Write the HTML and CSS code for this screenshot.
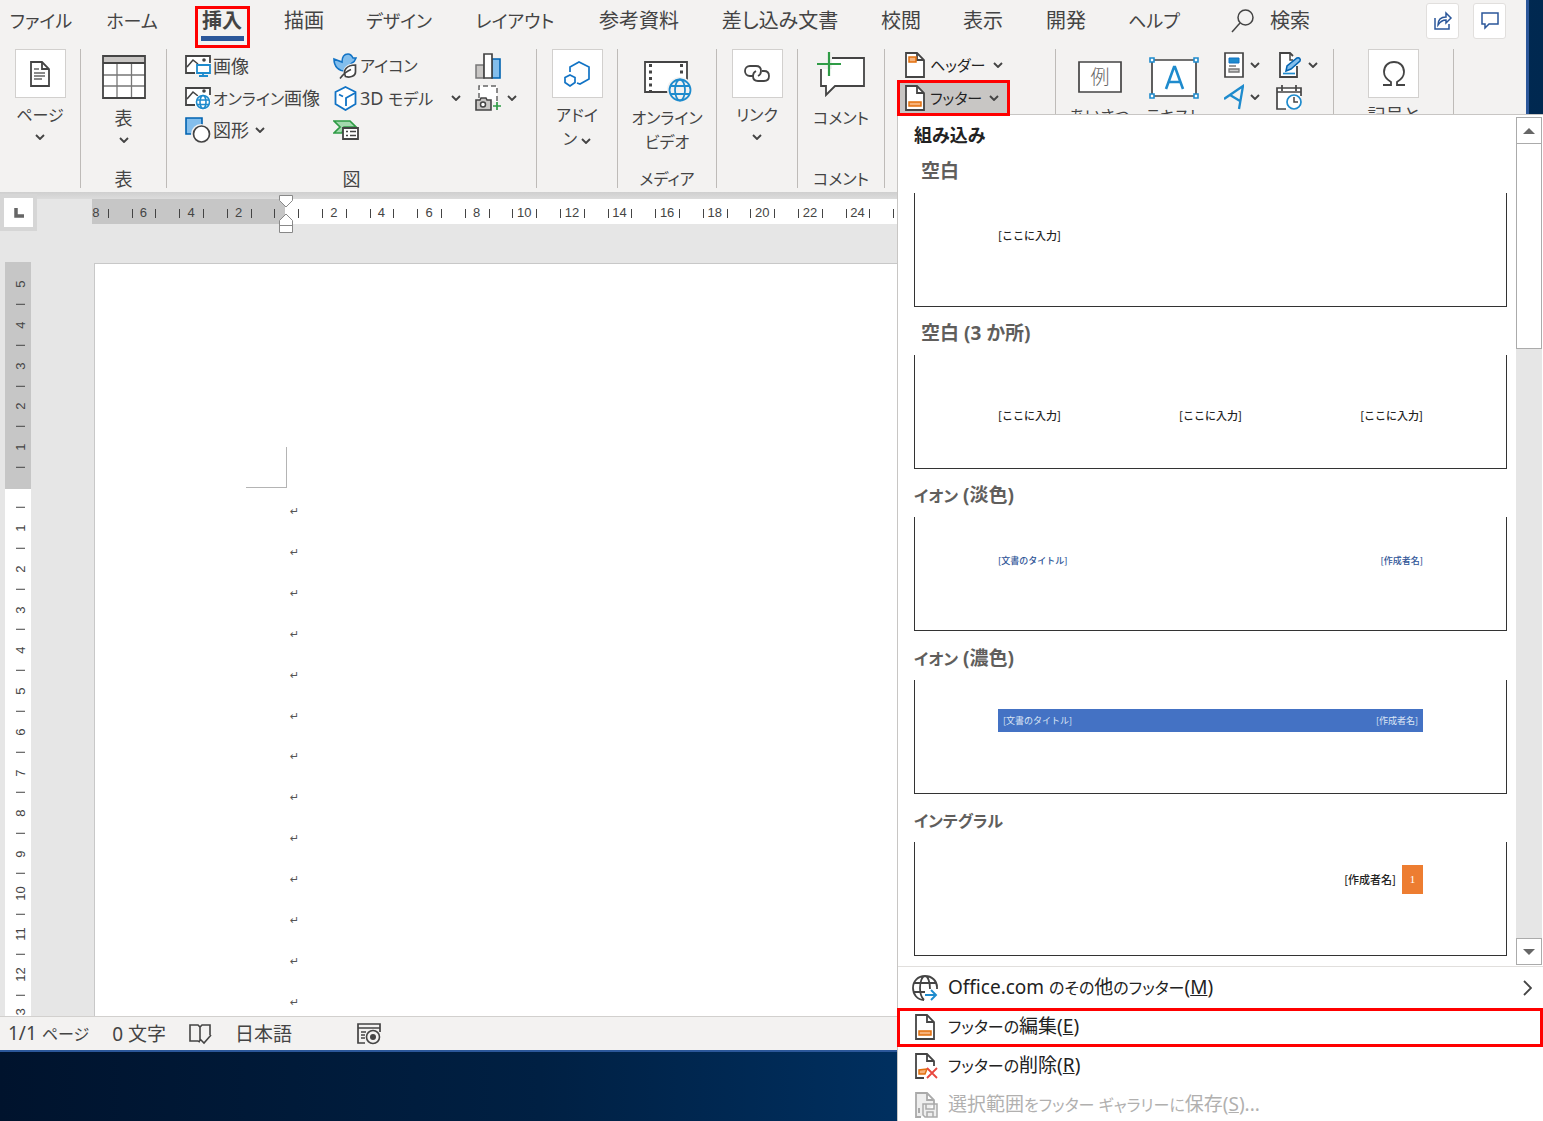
FILE: index.html
```html
<!DOCTYPE html>
<html lang="ja">
<head>
<meta charset="utf-8">
<meta name="viewport" content="width=device-width, initial-scale=1">
<title>文書 1</title>
<link rel="stylesheet" href="styles.css">
</head>
<body>
<svg class="defs" aria-hidden="true">
  <symbol id="chev" viewBox="0 0 10 6"><path d="M1 1l4 4 4-4" fill="none" stroke="#444" stroke-width="1.9"/></symbol>
  <symbol id="globe" viewBox="0 0 24 24"><g fill="none" stroke="currentColor"><circle cx="12" cy="12" r="10.500"/><ellipse cx="12" cy="12" rx="5" ry="10.500"/><path d="M2 8h20M2 16h20"/></g></symbol>
  <symbol id="sheet" viewBox="0 0 20 26"><path d="M1 1h11l7 7v17H1z" fill="#fff" stroke="#444" stroke-width="1.8"/><path d="M12 1v7h7" fill="none" stroke="#444" stroke-width="1.8"/></symbol>
</svg>

<div class="window">
  <header class="tabs">
    <nav class="tab-list">
      <a href="#" class="tab kana">ファイル</a>
      <a href="#" class="tab kana">ホーム</a>
      <a href="#" class="tab active"><span>挿入</span></a>
      <a href="#" class="tab">描画</a>
      <a href="#" class="tab kana">デザイン</a>
      <a href="#" class="tab kana">レイアウト</a>
      <a href="#" class="tab">参考資料</a>
      <a href="#" class="tab">差し込み文書</a>
      <a href="#" class="tab">校閲</a>
      <a href="#" class="tab">表示</a>
      <a href="#" class="tab">開発</a>
      <a href="#" class="tab kana">ヘルプ</a>
    </nav>
    <label class="search">
      <svg width="23" height="24" viewBox="0 0 23 24"><g fill="none" stroke="#444" stroke-width="1.5"><circle cx="14.500" cy="8.500" r="7.500"/><path d="M9 14L1 23"/></g></svg>
      <input type="search" placeholder="検索" aria-label="検索">
    </label>
    <div class="corner">
      <button class="corner-btn" aria-label="共有"><svg width="20" height="20" viewBox="0 0 20 20"><g fill="none" stroke="#2b579a" stroke-width="1.5"><path d="M2 7v11h14v-5"/><path d="M5 14c0-5 3-8 8-8V2l5 5-5 5V9c-4 0-6 2-8 5z"/></g></svg></button>
      <button class="corner-btn" aria-label="コメント"><svg width="20" height="20" viewBox="0 0 20 20"><path d="M2 2h16v11H9l-4 4v-4H2z" fill="none" stroke="#2b579a" stroke-width="1.500"/></svg></button>
    </div>
  </header>

  <div class="ribbon">
    <section class="group g-page">
      <button class="big">
        <span class="tile"><svg width="20" height="26" viewBox="0 0 20 26"><use href="#sheet"/><path d="M4 8h5M4 12h11M4 15h11M4 18h8" stroke="#666" stroke-width="1.300"/></svg></span>
        <span class="cap kana">ページ</span>
        <svg class="chev"><use href="#chev"/></svg>
      </button>
    </section>

    <section class="group g-table">
      <button class="big low">
        <svg width="44" height="44" viewBox="0 0 44 44"><path d="M1 1h42v42H1z" fill="#fff"/><path d="M1 1h42v7H1z" fill="#c8c6c4"/><g fill="none" stroke="#777" stroke-width="1.300"><path d="M15 8v35M29.500 8v35M1 20h42M1 31h42"/></g><path d="M1 1h42v42H1zM1 8h42" fill="none" stroke="#444" stroke-width="1.800"/></svg>
        <span class="cap">表</span>
        <svg class="chev"><use href="#chev"/></svg>
      </button>
      <h2 class="label">表</h2>
    </section>

    <section class="group g-figure">
      <div class="cols">
        <div class="col">
          <button class="small"><svg width="26" height="24" viewBox="0 0 26 24"><path d="M1 2h24v17H1z" fill="#fff"/><path d="M10 19H1V2h24v7" fill="none" stroke="#444" stroke-width="1.800"/><path d="M2 13l6-7 5 4" fill="none" stroke="#444" stroke-width="1.600"/><circle cx="19" cy="6" r="1.800" fill="#444"/><path d="M12 11h13v8H12zM18 19v3M14 22h9" fill="#fff" stroke="#1e8bcd" stroke-width="1.800"/></svg><span>画像</span></button>
          <button class="small"><svg width="26" height="24" viewBox="0 0 26 24"><path d="M1 2h24v17H1z" fill="#fff"/><path d="M10 19H1V2h24v7" fill="none" stroke="#444" stroke-width="1.800"/><path d="M2 13l6-7 5 4" fill="none" stroke="#444" stroke-width="1.600"/><circle cx="19" cy="5" r="1.800" fill="#444"/><circle cx="18" cy="16" r="8" fill="#fff"/><g fill="none" stroke="#1e8bcd" stroke-width="1.600"><circle cx="18" cy="16" r="6.500"/><ellipse cx="18" cy="16" rx="3" ry="6.500"/><path d="M12 14h12M12 18.500h12"/></g></svg><span><i class="kana">オンライン</i>画像</span></button>
          <button class="small"><svg width="26" height="26" viewBox="0 0 26 26"><path d="M1 1h16v16H1z" fill="#83beec" stroke="#0063b1" stroke-width="1.600"/><circle cx="16" cy="17" r="10" fill="#f3f2f1"/><circle cx="16.500" cy="17" r="8" fill="#fff" stroke="#444" stroke-width="1.700"/></svg><span>図形</span><svg class="chev"><use href="#chev"/></svg></button>
        </div>
        <div class="col">
          <button class="small"><svg width="25" height="26" viewBox="0 0 25 26"><path d="M1 6l8 3c0-5 2-8 6-8 3 0 4 2 5 4h3c-1 3-2 4-4 5l-7 8C6 18 1 14 1 6z" fill="#83beec" stroke="#1173c5" stroke-width="1.600"/><path d="M24 10v10c0 4-7 7-13 4-3-8 2-14 13-14z" fill="#f3f2f1"/><path d="M22.500 12v7c0 4-5 6-10 4.500-3-6 1-11.500 10-11.500z" fill="#fff" stroke="#444" stroke-width="1.700"/><path d="M7 25.500c3-4 6-7 11-9" fill="none" stroke="#444" stroke-width="1.600"/></svg><span class="kana">アイコン</span></button>
          <button class="small"><svg width="25" height="25" viewBox="0 0 25 25"><path d="M12.500 1l10 5v12l-10 6-10-6V6z" fill="#fff" stroke="#1173c5" stroke-width="1.800"/><path d="M6 8.500l4 2M22 7l-9 5v8" fill="none" stroke="#1173c5" stroke-width="1.800"/></svg><span>3D <i class="kana">モデル</i></span><svg class="chev far"><use href="#chev"/></svg></button>
          <button class="small" aria-label="SmartArt"><svg width="26" height="22" viewBox="0 0 26 22"><path d="M1 2h16l6 6H11l-2 6H1l6-6z" fill="#a3d9ae" stroke="#2f9c46" stroke-width="1.700"/><path d="M10 9h15v11H10z" fill="#fff" stroke="#444" stroke-width="1.800"/><path d="M13 12.500h2M13 16.500h2M17 12.500h6M17 16.500h6" stroke="#444" stroke-width="1.500"/></svg></button>
        </div>
        <div class="col">
          <button class="small" aria-label="グラフ"><svg width="26" height="26" viewBox="0 0 26 26"><path d="M1 12h8v13H1z" fill="#c8c6c4" stroke="#777" stroke-width="1.500"/><path d="M17 6h8v19h-8z" fill="#83beec" stroke="#0063b1" stroke-width="1.600"/><path d="M9 1h8v24H9z" fill="#fff" stroke="#444" stroke-width="1.700"/></svg></button>
          <button class="small" aria-label="スクリーンショット"><svg width="26" height="26" viewBox="0 0 26 26"><path d="M4 13V1h18v16" fill="#fff" stroke="#666" stroke-width="1.500" stroke-dasharray="5 3"/><path d="M1 15h4l1-2h5l1 2h4v10H1z" fill="#c8c6c4" stroke="#444" stroke-width="1.600"/><circle cx="8" cy="19.500" r="2.500" fill="#fff" stroke="#444" stroke-width="1.500"/><path d="M22 17v8M18 21h8" stroke="#2f9c46" stroke-width="1.700"/></svg><svg class="chev"><use href="#chev"/></svg></button>
        </div>
      </div>
      <h2 class="label">図</h2>
    </section>

    <section class="group g-addin">
      <button class="big">
        <span class="tile"><svg width="26" height="26" viewBox="0 0 26 26"><g fill="none" stroke="#1173c5" stroke-width="1.700"><path d="M6 11V6l9-5 10 5v12l-9 5-3-1"/><path d="M6 14l5 2.500v5L6 25l-5-3.500v-5z"/></g></svg></span>
        <span class="cap kana">アドイ</span>
        <span class="cap kana">ン <svg class="chev"><use href="#chev"/></svg></span>
      </button>
    </section>

    <section class="group g-media">
      <button class="big low">
        <svg width="48" height="44" viewBox="0 0 48 44"><path d="M2 7h42v30H2z" fill="#fff" stroke="#444" stroke-width="1.800"/><path d="M7.500 9v28M38.500 9v12" stroke="#444" stroke-width="3" stroke-dasharray="3 3.500"/><circle cx="37" cy="35" r="13" fill="#f3f2f1"/><svg x="25" y="23" width="24" height="24" color="#1e8bcd" stroke-width="1.800" overflow="visible"><use href="#globe" width="24" height="24"/></svg></svg>
        <span class="cap kana">オンライン</span>
        <span class="cap kana">ビデオ</span>
      </button>
      <h2 class="label kana">メディア</h2>
    </section>

    <section class="group g-link">
      <button class="big">
        <span class="tile"><svg width="26" height="18" viewBox="0 0 26 18"><g fill="none" stroke="#444" stroke-width="1.800"><path d="M9 11H6C3 11 1 9 1 6s2-5 5-5h6c3 0 5 2 5 5 0 2-1 4-3 5"/><path d="M18 6h2c3 0 5 2 5 5s-2 5-5 5h-6c-3 0-5-2-5-5 0-2 1-4 3-5"/></g></svg></span>
        <span class="cap kana">リンク</span>
        <svg class="chev"><use href="#chev"/></svg>
      </button>
    </section>

    <section class="group g-comment">
      <button class="big low">
        <svg width="48" height="44" viewBox="0 0 48 44"><path d="M15 3h32v28H18l-9 9v-9H4V13" fill="#fff" stroke="#444" stroke-width="1.800"/><path d="M0 0h15v14H0z" fill="#f3f2f1"/><path d="M12-3v24M0 9h24" stroke="#2f9c46" stroke-width="2.200"/></svg>
        <span class="cap kana">コメント</span>
      </button>
      <h2 class="label kana">コメント</h2>
    </section>

    <section class="group g-header">
      <button class="drop"><svg width="20" height="26" viewBox="0 0 20 26"><use href="#sheet"/><path d="M4 5h7v5H4z" fill="#f7b27a" stroke="#e2700f" stroke-width="1.500"/></svg><span>ヘッダー</span><svg class="chev"><use href="#chev"/></svg></button>
      <div class="footer-drop">
        <button class="drop open" aria-expanded="true"><svg width="20" height="26" viewBox="0 0 20 26"><use href="#sheet"/><path d="M4 17h12v4H4z" fill="#f7b27a" stroke="#e2700f" stroke-width="1.500"/></svg><span>フッター</span><svg class="chev"><use href="#chev"/></svg></button>

        <div class="menu">
          <div class="gallery">
            <div class="gallery-main">
              <h3 class="gallery-head">組み込み</h3>
              <div class="gallery-list">
                <div class="style"><h4 class="indent">空白</h4><div class="preview mid"><span>[ここに入力]</span></div></div>
                <div class="style"><h4 class="indent">空白 (3 か所)</h4><div class="preview lower"><span>[ここに入力]</span><span>[ここに入力]</span><span>[ここに入力]</span></div></div>
                <div class="style"><h4><i class="kana">イオン</i> (淡色)</h4><div class="preview mid blue"><span>[文書のタイトル]</span><span>[作成者名]</span></div></div>
                <div class="style"><h4><i class="kana">イオン</i> (濃色)</h4><div class="preview bar"><div class="band"><span>[文書のタイトル]</span><span>[作成者名]</span></div></div></div>
                <div class="style"><h4><i class="kana">インテグラル</i></h4><div class="preview integral"><span>[作成者名]</span><b class="num">1</b></div></div>
              </div>
            </div>
            <div class="scroll">
              <button class="arrow" aria-label="上へ"><svg width="12" height="6" viewBox="0 0 12 6"><path d="M6 0l6 6H0z" fill="#666"/></svg></button>
              <div class="track"><div class="thumb"></div></div>
              <button class="arrow" aria-label="下へ"><svg width="12" height="6" viewBox="0 0 12 6"><path d="M0 0h12L6 6z" fill="#666"/></svg></button>
            </div>
          </div>
          <div class="commands">
            <button class="cmd"><svg width="26" height="26" viewBox="0 0 26 26"><g fill="none" stroke="#444" stroke-width="1.800"><path d="M12 25C5 25 1 19 1 13 1 6 6 1 13 1s12 5 12 11v2M12 25c-3-3-4-7-4-12 0-6 2-12 5-12s5 6 5 13M2 8h22M2 17h11"/></g><path d="M13 20h11M19 15l5 5-5 5" fill="none" stroke="#1e8bcd" stroke-width="1.900"/></svg><span>Office.com <i class="kana">のその</i>他<i class="kana">のフッター</i>(<u>M</u>)</span><svg class="sub" width="9" height="16" viewBox="0 0 9 16"><path d="M1 1l7 7-7 7" fill="none" stroke="#444" stroke-width="1.800"/></svg></button>
            <button class="cmd marked"><svg width="26" height="26" viewBox="0 0 26 26"><use href="#sheet" x="3" width="20" height="26"/><path d="M7 17h12v4H7z" fill="#f7b27a" stroke="#e2700f" stroke-width="1.500"/></svg><span><i class="kana">フッターの</i>編集(<u>E</u>)</span></button>
            <button class="cmd"><svg width="26" height="26" viewBox="0 0 26 26"><path d="M12 25H4V1h11l7 7v5M15 1v7h7" fill="none" stroke="#444" stroke-width="1.800"/><path d="M15 16l-8 1v4h6z" fill="#f7b27a" stroke="#e2700f" stroke-width="1.500"/><path d="M15 15l10 10M25 15L15 25" stroke="#e8483f" stroke-width="1.800"/></svg><span><i class="kana">フッターの</i>削除(<u>R</u>)</span></button>
            <button class="cmd" disabled><svg width="26" height="26" viewBox="0 0 26 26"><path d="M9 25H4V1h11l7 7v4M15 1v7h7" fill="#eee" stroke="#aaa" stroke-width="1.800"/><path d="M7 16v5" stroke="#aaa" stroke-width="2"/><path d="M11 12h14v13H13l-2-2zM14 12v5h8v-5M15 25v-5h6v5" fill="#eee" stroke="#aaa" stroke-width="1.500"/></svg><span>選択範囲<i class="kana">をフッター ギャラリーに</i>保存(<u>S</u>)...</span></button>
          </div>
        </div>
      </div>
    </section>

    <section class="group g-text">
      <button class="big low">
        <svg width="46" height="44" viewBox="0 0 46 44"><path d="M2 7h42v30H2z" fill="#fff" stroke="#444" stroke-width="1.700"/><text x="23" y="29" text-anchor="middle" font-size="19" fill="#666" font-weight="300">例</text></svg>
        <span class="cap kana">あいさつ</span>
      </button>
      <button class="big low">
        <svg width="50" height="44" viewBox="0 0 50 44"><path d="M3 5h44v36H3z" fill="#fff" stroke="#444" stroke-width="1.700"/><path d="M17 34l8-22h1l8 22M19 27h13" fill="none" stroke="#1e8bcd" stroke-width="2.600"/><g fill="#fff" stroke="#1e8bcd" stroke-width="1.600"><path d="M1 3h4v4H1zM45 3h4v4h-4zM1 39h4v4H1zM45 39h4v4h-4z"/></g></svg>
        <span class="cap kana">テキスト</span>
      </button>
      <div class="icons">
        <button class="small" aria-label="クイック パーツ"><svg width="20" height="26" viewBox="0 0 20 26"><path d="M1 1h18v24H1z" fill="#fff" stroke="#444" stroke-width="1.700"/><path d="M5 6h10v5H5z" fill="#1e8bcd" stroke="#1173c5"/><path d="M5 14h7M5 17h10v3H5z" fill="#ccc" stroke="#777" stroke-width="1.300"/></svg><svg class="chev"><use href="#chev"/></svg></button>
        <button class="small" aria-label="署名欄"><svg width="26" height="26" viewBox="0 0 26 26"><path d="M4 1h10l7 7v17H4z" fill="#fff"/><path d="M21 14v11H4V1h10l3 3" fill="none" stroke="#444" stroke-width="1.800"/><path d="M14 1v7h3" fill="none" stroke="#444" stroke-width="1.500"/><path d="M10 19l1-5L21 6c2-1 4 1 3 3l-9 8z" fill="#83beec" stroke="#0063b1" stroke-width="1.500"/><path d="M7 21.500h12" stroke="#1e8bcd" stroke-width="1.700"/></svg><svg class="chev"><use href="#chev"/></svg></button>
        <button class="small" aria-label="ワードアート"><svg width="20" height="26" viewBox="0 0 20 26"><path d="M0 15L19 2l-4 23M6 11l10 6" fill="none" stroke="#1e8bcd" stroke-width="2.300"/></svg><svg class="chev"><use href="#chev"/></svg></button>
        <button class="small" aria-label="日付と時刻"><svg width="26" height="26" viewBox="0 0 26 26"><path d="M1 4h24v21H1z" fill="#fff"/><path d="M10 25H1V4h24v8M1 8h24M6 1v6M20 1v6" fill="none" stroke="#444" stroke-width="1.700"/><circle cx="18" cy="18" r="7" fill="#fff" stroke="#1e8bcd" stroke-width="1.700"/><path d="M18 13v5h4" fill="none" stroke="#444" stroke-width="1.500"/></svg></button>
      </div>
    </section>

    <section class="group g-symbol">
      <button class="big">
        <span class="tile"><svg width="24" height="26" viewBox="0 0 24 26"><path d="M1 24h8v-3C4 18 2 15 2 11 2 5 6 1 12 1s10 4 10 10c0 4-2 7-7 10v3h8" fill="none" stroke="#444" stroke-width="1.800"/></svg></span>
        <span class="cap">記号と</span>
      </button>
    </section>
  </div>

  <main class="workspace">
    <div class="hruler-row">
      <button class="tabstop" aria-label="タブ"><svg width="10" height="10" viewBox="0 0 10 10"><path d="M2 0v8h8" fill="none" stroke="#666" stroke-width="3.500"/></svg></button>
      <div class="hruler">
        <div class="hscale"><b>8</b><b>6</b><b>4</b><b>2</b><b></b><b>2</b><b>4</b><b>6</b><b>8</b><b>10</b><b>12</b><b>14</b><b>16</b><b>18</b><b>20</b><b>22</b><b>24</b><b>26</b></div>
      </div>
      <svg class="indent-mark" width="14" height="38" viewBox="0 0 14 38"><g fill="#fff" stroke="#888"><path d="M.5.500h13v5L7 12 .5 5.500z"/><path d="M.5 37.500v-12L7 19l6.500 6.500v12zM.5 30.500h13"/></g></svg>
    </div>
    <div class="canvas">
      <div class="vruler">
        <div class="vmargin"><b>5</b><b>4</b><b>3</b><b>2</b><b>1</b></div>
        <div class="vbody"><div class="vscale"><b>1</b><b>2</b><b>3</b><b>4</b><b>5</b><b>6</b><b>7</b><b>8</b><b>9</b><b>10</b><b>11</b><b>12</b><b>13</b></div></div>
      </div>
      <article class="page">
        <div class="crop"></div>
        <div class="paras"><p>↵</p><p>↵</p><p>↵</p><p>↵</p><p>↵</p><p>↵</p><p>↵</p><p>↵</p><p>↵</p><p>↵</p><p>↵</p><p>↵</p><p>↵</p></div>
      </article>
    </div>
  </main>

  <footer class="status">
    <span>1/1 <i class="kana">ページ</i></span>
    <span>0 文字</span>
    <svg width="23" height="22" viewBox="0 0 23 22"><path d="M11 19l-2-1H1V2h8l2 2 2-2h8v10M11 4v14M11 16l4 4 7-8" fill="none" stroke="#444" stroke-width="1.600"/></svg>
    <span>日本語</span>
    <svg class="macro" width="24" height="22" viewBox="0 0 24 22"><path d="M8 20H1V1h22v8M1 5h22" fill="none" stroke="#444" stroke-width="1.700"/><path d="M4 9h5M4 12h4M4 15h4" stroke="#444" stroke-width="1.500"/><circle cx="16" cy="14" r="6.500" fill="#f3f2f1" stroke="#444" stroke-width="1.600"/><circle cx="16" cy="14" r="3" fill="#444"/></svg>
  </footer>
</div>
</body>
</html>
```
FILE: styles.css
```css
* { box-sizing: border-box; }

body {
  margin: 0;
  height: 100vh;
  overflow: hidden;
  padding: 0 14px 69px 0;
  background: linear-gradient(90deg, #00132d 0, #002043 35%, #003468 65%, #002850 100%);
  color: #444;
  font: 18px/24px "Noto Sans", "Noto Sans CJK JP", sans-serif;
  font-feature-settings: "palt";
}

h2, h3, h4, p { margin: 0; font-size: inherit; font-weight: 400; }
i { font-style: normal; }
a { color: inherit; text-decoration: none; }
svg { display: block; flex: none; }
button {
  padding: 0;
  border: 0;
  background: none;
  color: inherit;
  font: inherit;
  font-feature-settings: inherit;
}

.defs { display: none; }
.kana { font-size: 16px; }
.chev { width: 10px; height: 6px; }

.window {
  height: 100%;
  display: flex;
  flex-direction: column;
  border-right: 3px solid #2b579a;
  border-bottom: 2px solid #2b579a;
  background: #f3f2f1;
}

/* Tab strip */
.tabs { display: flex; height: 49px; }
.tab-list {
  display: grid;
  grid-template-columns: 82px 100px 80px 84px 106px 126px 122px 160px 82px 82px 84px 92px;
}
.tab {
  display: flex;
  justify-content: center;
  padding-top: 6px;
  font-size: 20px;
  line-height: 30px;
  white-space: nowrap;
}
.tab.kana { font-size: 18px; }
.active { font-weight: 700; }
.active span {
  height: 42px;
  width: 55px;
  outline: 3px solid #f00;
  outline-offset: -3px;
  text-align: center;
  background: linear-gradient(#2b579a, #2b579a) center 30px / 43px 5px no-repeat;
}
.search { display: flex; gap: 16px; padding: 9px 0 0 31px; }
.search input {
  width: 100px;
  height: 24px;
  padding: 0;
  border: 0;
  background: none;
  font: inherit;
  font-size: 20px;
}
.search input::placeholder { color: #444; opacity: 1; }
.corner { display: flex; gap: 14px; margin-left: auto; padding: 3px 20px 0 0; }
.corner-btn {
  display: grid;
  place-items: center;
  width: 33px;
  height: 36px;
  border: 1px solid #e1dfdd;
  border-radius: 3px;
  background: #fff;
}

/* Ribbon */
.ribbon { display: flex; height: 143px; padding-bottom: 4px; }
.group {
  display: flex;
  flex: none;
  flex-direction: column;
  border-right: 1px solid #bebbb8;
}
.g-page { width: 81px; }
.g-table { width: 86px; }
.g-figure { width: 370px; }
.g-addin { width: 81px; }
.g-media { width: 99px; }
.g-link { width: 81px; }
.g-comment { width: 87px; }
.g-header { width: 171px; padding-left: 12px; }
.g-text { width: 278px; flex-direction: row; padding-left: 13px; gap: 13px; }
.g-symbol { width: 120px; }
.label { margin-top: auto; line-height: 17px; text-align: center; }
.big { display: flex; flex-direction: column; align-items: center; white-space: nowrap; }
.big.low { padding-top: 6px; }
.tile {
  display: grid;
  place-items: center;
  width: 51px;
  height: 49px;
  margin-bottom: 5px;
  border: 1px solid #d2d0ce;
  background: #fff;
}
.big.low > svg { margin-bottom: 7px; overflow: visible; }
.cap { line-height: 24px; }
.cap .chev { display: inline-block; vertical-align: middle; }
.big > .chev { margin-top: 7px; }
.g-text .big { width: 61px; }
.g-text .big.low > svg { margin-bottom: 5px; }

.cols { display: flex; padding: 1px 0 0 18px; }
.col { display: flex; flex-direction: column; width: 142px; }
.col:first-child { width: 148px; }
.col:last-child { width: 50px; }
.small { display: flex; align-items: center; gap: 2px; height: 32px; white-space: nowrap; }
.small .chev { margin-left: 4px; }
.small .chev.far { margin-left: 16px; }

.drop { display: flex; align-items: center; gap: 5px; height: 31px; padding-left: 8px; color: #222; font-size: 15px; }
.drop .chev { margin-left: 2px; }
.footer-drop { position: relative; z-index: 2; width: 113px; height: 36px; }
.drop.open { width: 100%; height: 100%; background: #c8c6c4; }
.footer-drop::after {
  content: "";
  position: absolute;
  z-index: 2;
  inset: 0;
  border: 3px solid #f00;
  pointer-events: none;
}
.icons { display: grid; grid-template-columns: 52px 46px; align-content: start; margin-left: 7px; }

/* Footer gallery menu */
.menu {
  position: absolute;
  top: 34px;
  left: 0;
  width: 646px;
  border: 1px solid #c8c6c4;
  border-right: 0;
  background: #fff;
  color: #222;
  font-size: 19px;
}
.gallery { display: flex; height: 852px; border-bottom: 1px solid #e1dfdd; }
.gallery-main { display: flex; flex: 1; flex-direction: column; padding: 0 9px 0 16px; }
.gallery-head { padding: 8px 0; font-size: 18px; font-weight: 700; }
.gallery-list { display: grid; flex: 1; grid-template-rows: repeat(5, 1fr); }
.style h4 { height: 38px; line-height: 32px; font-weight: 700; color: #605e5c; }
.style h4.indent { padding-left: 7px; }
.preview {
  display: flex;
  justify-content: space-between;
  height: 114px;
  padding: 0 83px;
  border: 1px solid #333;
  border-top: 0;
  color: #222;
  font: 500 11px/16px "Noto Sans CJK JP", sans-serif;
}
.mid { padding-top: 34px; }
.lower { padding-top: 52px; }
.blue { padding-top: 36px; color: #2f5597; font-size: 9px; }
.bar { padding-top: 29px; }
.band {
  display: flex;
  flex: 1;
  justify-content: space-between;
  height: 23px;
  padding: 0 5px;
  background: #4472c4;
  color: #dce6f5;
  font-size: 9px;
  font-weight: 400;
  line-height: 23px;
}
.integral { justify-content: flex-end; gap: 6px; padding-top: 23px; line-height: 29px; }
.num {
  width: 21px;
  height: 29px;
  background: #ed7d31;
  color: #fff;
  font-family: "Liberation Serif", serif;
  font-weight: 400;
  text-align: center;
}

.scroll { display: flex; flex-direction: column; width: 27px; padding: 2px 1px 1px 0; }
.arrow {
  display: grid;
  place-items: center;
  height: 27px;
  border: 1px solid #ababab;
  background: #fff;
}
.track { flex: 1; background: #e6e6e6; }
.thumb { height: 205px; border: 1px solid #ababab; border-top: 0; background: #fff; }

.cmd {
  position: relative;
  display: flex;
  align-items: center;
  gap: 10px;
  width: 100%;
  height: 39px;
  padding: 0 11px 0 14px;
  text-align: left;
  white-space: nowrap;
}
.commands { padding-top: 1px; }
.cmd:disabled { color: #b1b0af; }
.cmd .sub { margin-left: auto; }
.marked::after {
  content: "";
  position: absolute;
  inset: 1px 0 -1px -1px;
  border: 3px solid #f00;
}

/* Document area */
.workspace {
  display: flex;
  flex: 1;
  flex-direction: column;
  min-height: 0;
  overflow: hidden;
  background: linear-gradient(#cfcfcf, #dcdcdc 7px, #e6e6e6 7px);
}
.hruler-row { position: relative; display: flex; flex: none; height: 70px; }
.tabstop {
  display: grid;
  place-items: center;
  width: 37px;
  height: 37px;
  margin-top: 2px;
  border: 4px solid #d6d6d6;
  background: #fff;
}
.hruler {
  flex: 1;
  height: 25px;
  margin: 7px 0 0 55px;
  overflow: hidden;
  background: linear-gradient(90deg, #c6c6c6 193px, #fff 193px);
}
.hscale { display: grid; grid-template-columns: repeat(18, 1fr); width: 857px; margin-left: -20px; }
.hscale b, .vruler b { font: 13px/14px "Liberation Sans", sans-serif; }
.hscale b {
  display: flex;
  align-items: center;
  justify-content: center;
  position: relative;
  height: 28px;
}
.hscale b::before, .hscale b::after {
  content: "";
  position: absolute;
  left: 25%;
  width: 1px;
  height: 9px;
  background: #444;
}
.hscale b::after { left: 75%; }
.indent-mark { position: absolute; left: 279px; top: 3px; }

.canvas { display: flex; flex: 1; min-height: 0; }
.vruler { display: flex; flex-direction: column; width: 26px; margin-left: 5px; }
.vmargin {
  display: grid;
  grid-template-rows: repeat(5, 1fr);
  flex: none;
  height: 227px;
  padding: 10px 0 13px;
  background: #c6c6c6;
}
.vbody { flex: 1; overflow: hidden; padding-top: 10px; background: #fff; }
.vscale { display: grid; grid-template-rows: repeat(13, 1fr); height: 530px; }
.vruler b {
  display: flex;
  align-items: center;
  justify-content: space-around;
  width: 14px;
  margin-left: 9px;
  writing-mode: vertical-rl;
  transform: rotate(180deg);
}
.vruler b::before {
  content: "";
  width: 9px;
  height: 1px;
  background: #444;
}
.vscale b { flex-direction: row-reverse; }
.page {
  flex: 1;
  margin: 1px 0 0 63px;
  border: 1px solid #c8c8c8;
  border-width: 1px 0 0 1px;
  background: #fff;
}
.crop {
  width: 41px;
  height: 41px;
  margin: 183px 0 4px 151px;
  border: 1px solid #b4b4b4;
  border-width: 0 1px 1px 0;
}
.paras { display: grid; grid-template-rows: repeat(13, 1fr); height: 531px; padding-left: 195px; }
.paras p { display: flex; align-items: center; color: #555; font: 11px/12px "DejaVu Sans", sans-serif; }

.status {
  display: flex;
  flex: none;
  align-items: center;
  gap: 23px;
  height: 34px;
  padding-left: 8px;
  border-top: 1px solid #d2d0ce;
  font-size: 19px;
}
.macro { margin-left: 42px; }
```
